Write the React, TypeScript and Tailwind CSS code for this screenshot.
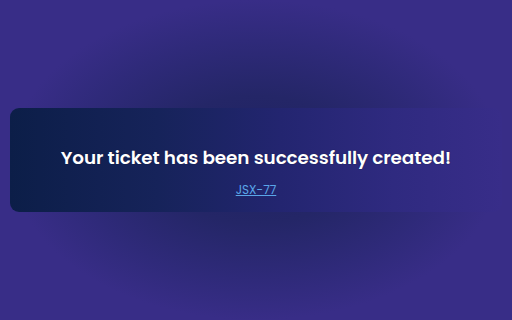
export default function App() {
  return (
    <div className="w-[512px] h-[320px] bg-[#382d87] bg-[radial-gradient(ellipse_48%_50%_at_50%_50%,#1e2262_0%,#242667_40%,#2f2a7a_75%,#382d87_100%)] flex items-center px-[10px] font-['Poppins','Inter','Noto_Sans',sans-serif]">
      <div className="w-full h-[104px] rounded-[9px] bg-[linear-gradient(90deg,#0c1e48_0%,#16235a_30%,#232570_55%,#2f2a80_78%,#382d89_100%)] flex flex-col items-center pt-[38px]">
        <h1 className="text-white text-[18.4px] font-semibold leading-[24px] tracking-[-0.1px] [text-shadow:0_0_1px_#0b0f3a]">
          Your ticket has been successfully created!
        </h1>
        <a href="#" className="mt-[12px] text-[12px] leading-[16px] text-[#5aa6e8] underline">
          JSX-77
        </a>
      </div>
    </div>
  );
}
